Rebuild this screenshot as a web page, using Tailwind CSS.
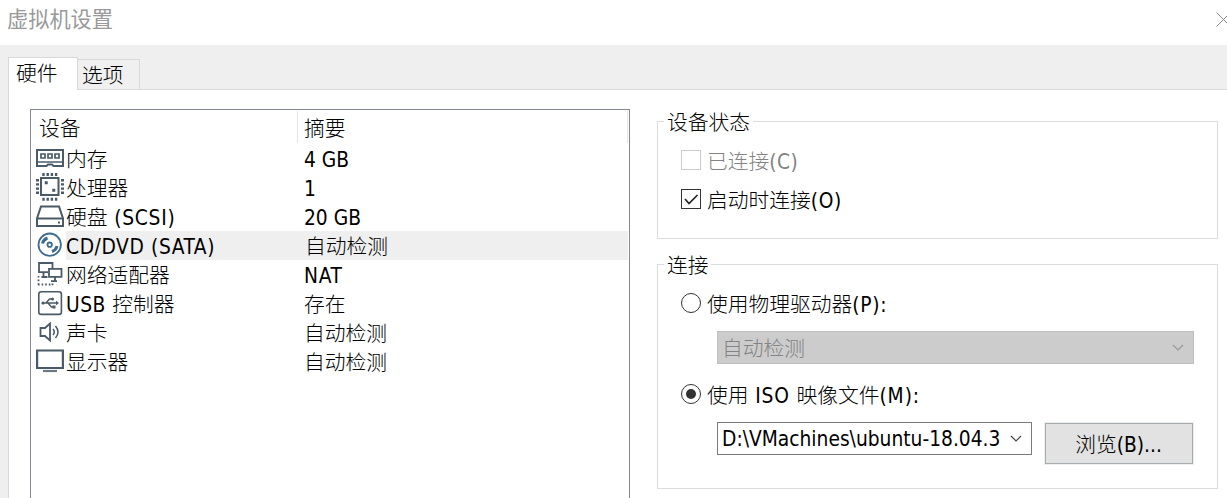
<!DOCTYPE html>
<html lang="zh-CN">
<head>
<meta charset="utf-8">
<title>虚拟机设置</title>
<script src="https://cdn.jsdelivr.net/npm/@tailwindcss/browser@4"></script>
</head>
<body class="flex h-[498px] w-[1227px] flex-col overflow-hidden bg-white font-['DejaVu_Sans_Condensed','DejaVu_Sans','Noto_Sans_CJK_SC',sans-serif] text-[20.75px] leading-[28px] font-light font-stretch-condensed whitespace-nowrap text-black">
  <header class="flex h-[45px] shrink-0 justify-between pl-[7px] text-[21.2px] font-normal text-[#999]">
    <h1 class="pt-[6px]">虚拟机设置</h1>
    <svg class="mt-[12px] h-4 w-[11px]" viewBox="0 0 11 16" fill="none" stroke="#888"><path d="M.5.5l14 14M.5 14.500l14-14"/></svg>
  </header>

  <nav class="flex h-[45px] shrink-0 items-end bg-[#efefef]">
    <div class="ml-2 h-[33px] w-[70px] border-x border-t border-[#d9d9d9] bg-white pt-[2px] pl-[7px]">硬件</div>
    <div class="h-[31px] w-[62px] border-y border-r border-[#d9d9d9] bg-[#f0f0f0] pt-[2px] pl-[4px]">选项</div>
    <div class="h-px flex-1 bg-[#d9d9d9]"></div>
  </nav>

  <div class="flex h-[408px] bg-[#efefef] pl-2">
  <main class="flex flex-1 border-l border-[#d9d9d9] bg-white pl-[21px]">
    <section class="mt-[19px] h-[389px] w-[600px] shrink-0 border-x border-t border-[#828790]">
      <div class="flex h-[34px] py-px leading-[36px]">
        <div class="w-[267px] border-r border-[#e5e5e5] pl-[8px]">设备</div>
        <div class="w-[330px] border-r border-[#e5e5e5] pl-[6px]">摘要</div>
      </div>
      <div class="flex h-[29px] items-start leading-[33px]">
        <svg class="ml-[5px] h-7 w-7 shrink-0" viewBox="0 0 28 28" fill="none" stroke="#4a5a67" stroke-width="2"><path d="M1 6h26v16H17.500l-1.500-1.500h-4L10.500 22H1z"/><path d="M1 18h26" stroke-width="1.500"/><path d="M5 10h4v4H5zM12 10h4v4h-4zM19 10h4v4h-4z" stroke-width="1.700"/></svg>
        <span class="w-[240px] pl-[2px]">内存</span><span>4 GB</span>
      </div>
      <div class="flex h-[29px] items-start leading-[33px]">
        <svg class="ml-[5px] h-7 w-7 shrink-0" viewBox="0 0 28 28" fill="none" stroke="#4a5a67" stroke-width="2"><path d="M5 5h17.500v17H5z"/><path d="M6.300 1.500h15.200M6.300 26.200h15.200M1.500 6v15.200M26.500 6v15.200" stroke-width="3" stroke-dasharray="2.400 1.800"/><path d="M9.500 9h1.500v1.500H9.500zM17 16.500h1.500v1.500h-1.500z" fill="#4a5a67" stroke-width="1.500"/></svg>
        <span class="w-[240px] pl-[2px]">处理器</span><span>1</span>
      </div>
      <div class="flex h-[29px] items-start leading-[33px]">
        <svg class="ml-[5px] h-7 w-7 shrink-0" viewBox="0 0 28 28" fill="none" stroke="#4a5a67" stroke-width="2"><path d="M5 4.500h18l4 12v7.500H1v-7.500z"/><path d="M1 16.500h26"/><path d="M22 20.500h2"/></svg>
        <span class="w-[240px] pl-[2px]">硬盘<span class="tracking-[0.75px]"> (SCSI)</span></span><span>20 GB</span>
      </div>
      <div class="flex h-[29px] items-start leading-[33px]">
        <svg class="ml-[5px] h-7 w-7 shrink-0" viewBox="0 0 28 28" fill="none" stroke="#3e6c8e" stroke-width="1.800"><circle cx="13.700" cy="13.700" r="11.200"/><circle cx="13.700" cy="13.700" r="2.200"/><path d="M6.500 12.500a7.500 7.500 0 0 1 5-5.500M21 15a7.500 7.500 0 0 1-5 5.500" stroke-width="3"/></svg>
        <div class="ml-[2px] flex h-full w-[562px] bg-[#efefef]"><span class="w-[238px] tracking-[0.6px]">CD/DVD (SATA)</span><span class="ml-px">自动检测</span></div>
      </div>
      <div class="flex h-[29px] items-start leading-[33px]">
        <svg class="ml-[5px] h-7 w-7 shrink-0" viewBox="0 0 28 28" fill="none" stroke="#4a5a67" stroke-width="1.800"><path d="M12 12.200H3V3h13.500v5M7.500 13v4M5.500 17h6"/><path d="M13 8.800h12.500v8H13zM19 17v4M15 21.200h6"/><path d="M2.500 16v9M2 24.500h15M16.500 25v-3" stroke-dasharray="1.600 2"/></svg>
        <span class="w-[240px] pl-[2px]">网络适配器</span><span class="tracking-[0.7px]">NAT</span>
      </div>
      <div class="flex h-[29px] items-start leading-[33px]">
        <svg class="ml-[5px] h-7 w-7 shrink-0" viewBox="0 0 28 28" fill="none" stroke="#4a5a67" stroke-width="1.600"><rect x="2.800" y="2.800" width="22.600" height="22.600" rx="2.500"/><path d="M6 14h15M10 14l3.500-4h3M12 14l3.500 4h2" stroke-width="1.500"/><path d="M20 11.700l3 2.300-3 2.300z" fill="#4a5a67" stroke="none"/><circle cx="7" cy="14" r="1.600" fill="#4a5a67" stroke="none"/><circle cx="16.500" cy="10" r="1.500" fill="#4a5a67" stroke="none"/><path d="M16.500 16.500h3v3h-3z" fill="#4a5a67" stroke="none"/></svg>
        <span class="w-[240px] pl-[2px]"><span class="tracking-[0.5px]">USB </span>控制器</span><span>存在</span>
      </div>
      <div class="flex h-[29px] items-start leading-[33px]">
        <svg class="ml-[5px] h-7 w-7 shrink-0" viewBox="0 0 28 28" fill="none" stroke="#4a5a67" stroke-width="1.800"><path d="M4.500 10h4.500L14 5.500v17L9 18H4.500z"/><path d="M17 11q2.500 3 0 6M19.500 8q5 6 0 12" stroke-width="1.500"/></svg>
        <span class="w-[240px] pl-[2px]">声卡</span><span>自动检测</span>
      </div>
      <div class="flex h-[29px] items-start leading-[33px]">
        <svg class="ml-[5px] h-7 w-7 shrink-0" viewBox="0 0 28 28" fill="none" stroke="#4a5a67" stroke-width="2.200"><path d="M1.100 3.500h25.800v17.500h-25.800z"/><path d="M7 24h14" stroke="#6b7780"/></svg>
        <span class="w-[240px] pl-[2px]">显示器</span><span>自动检测</span>
      </div>
    </section>

    <section class="ml-[27px] w-[561px] pt-[18px]">
      <fieldset class="h-[131px] border border-[#dcdcdc] pl-[23px]">
        <legend class="-ml-[17px] h-[27px] w-[89px] pl-[3px] leading-[31px]">设备状态</legend>
        <label class="mt-[11px] flex h-[28px] items-center text-[#838383]"><span class="mr-[6px] size-5 border border-[#ccc]"></span><span class="pt-[4px]">已连接<span class="tracking-[0.5px]">(C)</span></span></label>
        <label class="mt-[11px] flex h-[28px] items-center"><span class="mr-[6px] size-5 border border-[#333]"><svg viewBox="0 0 18 18" fill="none" stroke="#222" stroke-width="1.700"><path d="M3 9l4 4.500 8.500-8.500"/></svg></span><span class="pt-[4px]">启动时连接<span class="tracking-[0.6px]">(O)</span></span></label>
      </fieldset>
      <fieldset class="mt-[12px] h-[238px] border border-[#dcdcdc] pl-[23px]">
        <legend class="-ml-[17px] h-[27px] w-[47px] pl-[3px] leading-[31px]">连接</legend>
        <label class="mt-[11px] flex h-[28px] items-center"><span class="mr-[6px] size-5 rounded-full border border-[#333]"></span><span class="pt-[4px]">使用物理驱动器<span class="tracking-[0.7px]">(P):</span></span></label>
        <div class="mt-[14px] ml-[36px] flex h-[33px] w-[477px] items-center justify-between border border-[#bfbfbf] bg-[#ccc] pr-[9px] pl-[4px] text-[#838383]"><span class="pt-[3px]">自动检测</span><svg class="h-2 w-3" viewBox="0 0 12 8" fill="none" stroke="#999" stroke-width="1.200"><path d="M1 1l5 5 5-5"/></svg></div>
        <label class="mt-[16px] flex h-[28px] items-center"><span class="mr-[6px] flex size-5 items-center justify-center rounded-full border border-[#333]"><i class="size-[10px] rounded-full bg-[#333]"></i></span><span class="pt-[4px]">使用<span class="tracking-[0.8px]"> ISO </span>映像文件<span class="tracking-[0.9px]">(M):</span></span></label>
        <div class="mt-[14px] ml-[36px] flex">
          <div class="flex h-[33px] w-[315px] items-center justify-between border border-[#7a7a7a] pr-[9px] pl-[4px]"><span>D:\VMachines\ubuntu-18.04.3</span><svg class="h-2 w-3" viewBox="0 0 12 8" fill="none" stroke="#444" stroke-width="1.200"><path d="M1 1l5 5 5-5"/></svg></div>
          <button class="mt-px ml-[13px] h-[41px] w-[148px] border border-[#a5abaf] bg-[#e1e2e1] pt-[2px] outline outline-[#eee]"><span class="mr-px">浏览(B)...</span></button>
        </div>
      </fieldset>
    </section>
  </main>
  </div>
</body>
</html>
